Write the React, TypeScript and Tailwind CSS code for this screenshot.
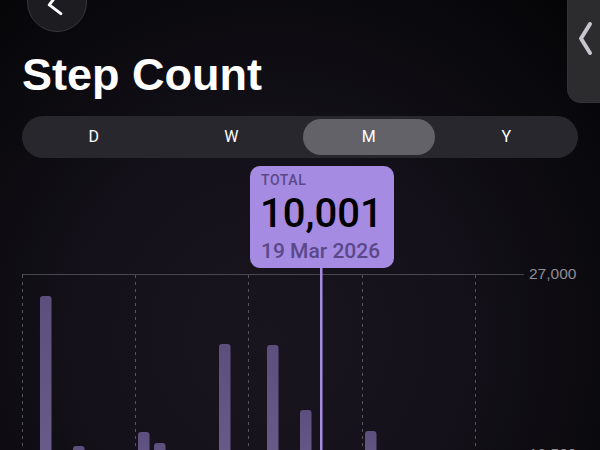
import React, { useState } from 'react';

const SEGMENTS = ['D', 'W', 'M', 'Y'];

// bar x positions and tops, in chart coordinates (chart starts at page y=158)
const BARS = [
  { x: 40, top: 138 },
  { x: 73, top: 288 },
  { x: 138, top: 274 },
  { x: 154, top: 285 },
  { x: 219, top: 186 },
  { x: 267, top: 187 },
  { x: 300, top: 252 },
  { x: 365, top: 273 },
];

const GRID_X = [22.5, 135.5, 248.5, 362.5, 475.5];

const App: React.FC = () => {
  const [range, setRange] = useState('M');

  return (
    <div
      className="relative w-[600px] h-[450px] overflow-hidden bg-[radial-gradient(ellipse_at_45%_75%,#18151f_0%,#14111a_40%,#0a090d_75%,#030305_100%)] text-white"
      style={{ fontFamily: '"Liberation Sans", Arial, sans-serif' }}
    >
      {/* back button */}
      <button
        type="button"
        className="-mt-[28px] ml-[27px] w-[60px] h-[60px] rounded-full bg-[#1d1c20] border border-[#38373c] flex items-center justify-center"
        aria-label="Back"
      >
        <svg width="60" height="60" viewBox="0 0 60 60" className="block">
          <path d="M29 24 L22 33 L34 42" fill="none" stroke="#ffffff" strokeWidth="3" strokeLinecap="round" strokeLinejoin="round" />
        </svg>
      </button>

      <h1 className="mt-[20px] ml-[22px] text-[45px] leading-[45px] font-bold">Step Count</h1>

      {/* range picker */}
      <div className="mt-[19px] mx-[22px] h-[42px] rounded-full bg-[#29272e] p-[3px] grid grid-cols-4" style={{ fontFamily: 'Roboto, sans-serif' }}>
        {SEGMENTS.map(s => (
          <button
            key={s}
            type="button"
            onClick={() => setRange(s)}
            className={`rounded-full text-[16px] text-white flex items-center justify-center ${range === s ? 'bg-[#636268] mx-[3px]' : ''}`}
          >
            {s}
          </button>
        ))}
      </div>

      {/* chart */}
      <div className="relative h-[300px] flex">
        <svg width="524" height="300" viewBox="0 0 524 300" className="block shrink-0">
          <line x1="22" y1="116.5" x2="524" y2="116.5" stroke="#48464e" strokeWidth="1" />
          {GRID_X.map(x => (
            <line key={x} x1={x} y1="117" x2={x} y2="300" stroke="#56545c" strokeWidth="1" strokeDasharray="3 4" />
          ))}
          <defs>
            <linearGradient id="bar" x1="0" y1="0" x2="0" y2="1">
              <stop offset="0" stopColor="#5c4f7e" />
              <stop offset="1" stopColor="#6a5d8b" />
            </linearGradient>
          </defs>
          {BARS.map(b => (
            <rect key={b.x} x={b.x} y={b.top} width="11.5" height={320 - b.top} rx="3" fill="url(#bar)" />
          ))}
          <rect x="320" y="108" width="2.5" height="200" fill="#a58be2" />
        </svg>

        {/* y axis labels */}
        <div className="flex flex-col gap-[162px] pt-[107px] pl-[5px] text-[15.5px] leading-[18px] text-[#8f8d95]">
          <span>27,000</span>
          <span>13,500</span>
        </div>

        {/* selection tooltip */}
        <div
          className="absolute left-[250px] top-[8px] w-[144px] h-[102px] rounded-[10px] bg-[#a58be2] px-[11px] pt-[6px] flex flex-col"
          style={{ fontFamily: 'Roboto, sans-serif' }}
        >
          <div className="text-[14px] leading-[16px] font-medium tracking-[0.6px] text-[#5b4889]">TOTAL</div>
          <div className="mt-[4px] text-[40px] leading-[44px] font-medium text-black -ml-[1px]">10,001</div>
          <div className="mt-[2px] text-[21px] leading-[26px] font-medium text-[#5b4889]">19 Mar 2026</div>
        </div>
      </div>

      {/* side drawer handle */}
      <div className="absolute top-0 right-0 w-[33px] h-[103px] rounded-bl-[14px] bg-[#2c2c2e] border-l border-b border-[#333236]">
        <svg width="33" height="103" viewBox="0 0 33 103" className="block">
          <path d="M22 24 L13 38.5 L22 53" fill="none" stroke="#c7c6cc" strokeWidth="4" strokeLinecap="round" strokeLinejoin="round" />
        </svg>
      </div>
    </div>
  );
};

export default App;
